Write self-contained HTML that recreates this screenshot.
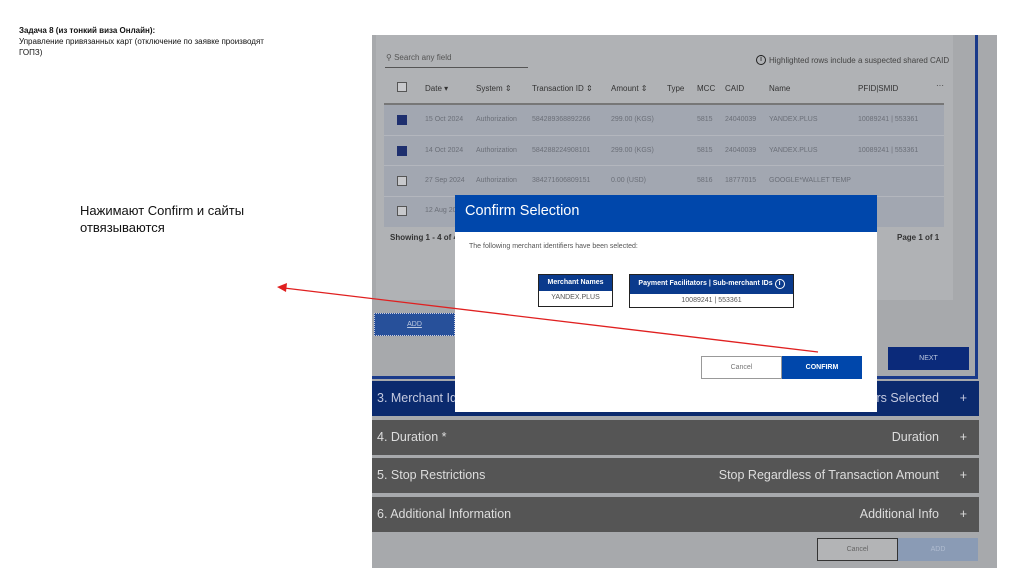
<!DOCTYPE html>
<html><head><meta charset="utf-8"><style>
*{margin:0;padding:0;box-sizing:border-box}
body{width:1024px;height:574px;background:#fff;position:relative;overflow:hidden;font-family:"Liberation Sans","DejaVu Sans",sans-serif}
.a{position:absolute}
.t{font-size:10.5px;color:#777;white-space:nowrap}
.h{font-size:8px;color:#333}
.r{font-size:7px;color:#6b6f78}
.cb{width:10px;height:10px;border:1px solid #555;background:#c8c9cc}
.cbk{width:10px;height:10px;background:#1e2f6e}
.acc{left:372px;width:607px;height:35px;background:#555;color:#ddd;font-size:12.5px;line-height:35px;padding-left:5px}
.acc span{position:absolute;right:12px}
.acc b{font-weight:normal;position:absolute;right:40px}
</style></head><body>
<div class="a" style="left:19px;top:25px;font-size:8px;font-weight:bold;color:#111;line-height:11px">Задача 8 (из тонкий виза Онлайн):</div>
<div class="a" style="left:19px;top:36px;font-size:8px;color:#111;line-height:11px;white-space:nowrap">Управление привязанных карт (отключение по заявке производят<br>ГОПЗ)</div>
<div class="a" style="left:80px;top:202px;font-size:13px;color:#111;line-height:17px">Нажимают Confirm и сайты<br>отвязываются</div>

<div class="a" style="left:372px;top:35px;width:625px;height:533px;background:#a7a9ac"></div>
<div class="a" style="left:376px;top:35px;width:577px;height:265px;background:#b0b2b5"></div>
<div class="a" style="left:975px;top:35px;width:3px;height:343px;background:#1a3a8a"></div>
<div class="a" style="left:372px;top:376px;width:606px;height:3px;background:#1a3a8a"></div>

<div class="a" style="left:385px;top:67px;width:143px;height:1px;background:#555"></div>
<div class="a t" style="left:386px;top:53px;font-size:8px;color:#555">⚲ Search any field</div>
<div class="a" style="left:756px;top:55px;width:10px;height:10px;border:1px solid #222;border-radius:50%;font-size:7px;text-align:center;line-height:8px">i</div>
<div class="a" style="left:769px;top:56px;font-size:8px;color:#444">Highlighted rows include a suspected shared CAID</div>

<div class="a cb" style="left:397px;top:82px"></div>
<div class="a h" style="left:425px;top:84px">Date ▾</div>
<div class="a h" style="left:476px;top:84px">System ⇕</div>
<div class="a h" style="left:532px;top:84px">Transaction ID ⇕</div>
<div class="a h" style="left:611px;top:84px">Amount ⇕</div>
<div class="a h" style="left:667px;top:84px">Type</div>
<div class="a h" style="left:697px;top:84px">MCC</div>
<div class="a h" style="left:725px;top:84px">CAID</div>
<div class="a h" style="left:769px;top:84px">Name</div>
<div class="a h" style="left:858px;top:84px">PFID|SMID</div>
<div class="a h" style="left:936px;top:81px">···</div>
<div class="a" style="left:384px;top:103px;width:560px;height:2px;background:#777"></div>
<div class="a" style="left:384px;top:105px;width:560px;height:122px;background:#a2a7b1"></div>
<div class="a" style="left:384px;top:135px;width:560px;height:1px;background:#b3b6bd"></div>
<div class="a" style="left:384px;top:165px;width:560px;height:1px;background:#b3b6bd"></div>
<div class="a" style="left:384px;top:196px;width:560px;height:1px;background:#b3b6bd"></div>

<div class="a cbk" style="left:397px;top:115px"></div>
<div class="a r" style="left:425px;top:116px">15 Oct 2024</div><div class="a r" style="left:476px;top:116px">Authorization</div><div class="a r" style="left:532px;top:116px">584289368892266</div><div class="a r" style="left:611px;top:116px">299.00 (KGS)</div><div class="a r" style="left:697px;top:116px">5815</div><div class="a r" style="left:725px;top:116px">24040039</div><div class="a r" style="left:769px;top:116px">YANDEX.PLUS</div><div class="a r" style="left:858px;top:116px">10089241 | 553361</div>
<div class="a cbk" style="left:397px;top:146px"></div>
<div class="a r" style="left:425px;top:147px">14 Oct 2024</div><div class="a r" style="left:476px;top:147px">Authorization</div><div class="a r" style="left:532px;top:147px">584288224908101</div><div class="a r" style="left:611px;top:147px">299.00 (KGS)</div><div class="a r" style="left:697px;top:147px">5815</div><div class="a r" style="left:725px;top:147px">24040039</div><div class="a r" style="left:769px;top:147px">YANDEX.PLUS</div><div class="a r" style="left:858px;top:147px">10089241 | 553361</div>
<div class="a cb" style="left:397px;top:176px"></div>
<div class="a r" style="left:425px;top:177px">27 Sep 2024</div><div class="a r" style="left:476px;top:177px">Authorization</div><div class="a r" style="left:532px;top:177px">384271606809151</div><div class="a r" style="left:611px;top:177px">0.00 (USD)</div><div class="a r" style="left:697px;top:177px">5816</div><div class="a r" style="left:725px;top:177px">18777015</div><div class="a r" style="left:769px;top:177px">GOOGLE*WALLET TEMP</div>
<div class="a cb" style="left:397px;top:206px"></div>
<div class="a r" style="left:425px;top:207px">12 Aug 2024</div>
<div class="a" style="left:390px;top:233px;font-size:8px;font-weight:bold;color:#333">Showing 1 - 4 of 4</div>
<div class="a" style="left:897px;top:233px;font-size:8px;font-weight:bold;color:#333">Page 1 of 1</div>

<div class="a" style="left:374px;top:313px;width:81px;height:23px;background:#27509a;border:1px dotted #ccd;color:#bcc8e0;font-size:7px;text-align:center;line-height:21px;text-decoration:underline">ADD</div>
<div class="a" style="left:888px;top:347px;width:81px;height:23px;background:#0b2a7a;color:#bcc8e0;font-size:7px;text-align:center;line-height:23px">NEXT</div>

<div class="a acc" style="top:381px;background:#0b2a6e;color:#c6cbe0">3. Merchant Identifiers<b>Merchant Identifiers Selected</b><span>+</span></div>
<div class="a acc" style="top:420px">4. Duration *<b>Duration</b><span>+</span></div>
<div class="a acc" style="top:458px">5. Stop Restrictions<b>Stop Regardless of Transaction Amount</b><span>+</span></div>
<div class="a acc" style="top:497px">6. Additional Information<b>Additional Info</b><span>+</span></div>
<div class="a" style="left:817px;top:538px;width:81px;height:23px;border:1px solid #333;background:#b3b4b6;font-size:7px;color:#666;text-align:center;line-height:21px">Cancel</div>
<div class="a" style="left:898px;top:538px;width:80px;height:23px;background:#8a9bb5;font-size:7px;color:#b0bcd0;text-align:center;line-height:23px">ADD</div>

<div class="a" style="left:455px;top:195px;width:422px;height:217px;background:#fff"></div>
<div class="a" style="left:455px;top:195px;width:422px;height:37px;background:#0047ab;color:#fff;font-size:14.5px;line-height:33px;padding-left:10px">Confirm Selection</div>
<div class="a" style="left:469px;top:243px;font-size:7px;color:#555">The following merchant identifiers have been selected:</div>
<div class="a" style="left:538px;top:274px;width:75px;height:33px;border:1px solid #222">
<div style="height:16px;background:#0a3a8c;color:#fff;font-size:7px;font-weight:bold;text-align:center;line-height:15px">Merchant Names</div>
<div style="font-size:7px;color:#555;text-align:center;line-height:14px">YANDEX.PLUS</div></div>
<div class="a" style="left:629px;top:274px;width:165px;height:34px;border:1px solid #222">
<div style="height:19px;background:#0a3a8c;color:#fff;font-size:7px;font-weight:bold;text-align:center;line-height:17px">Payment Facilitators | Sub-merchant IDs <span style="display:inline-block;width:10px;height:10px;border:1px solid #fff;border-radius:50%;line-height:8px;font-size:7px">i</span></div>
<div style="font-size:7px;color:#555;text-align:center;line-height:13px">10089241 | 553361</div></div>
<div class="a" style="left:701px;top:356px;width:81px;height:23px;border:1px solid #999;font-size:7px;color:#777;text-align:center;line-height:21px">Cancel</div>
<div class="a" style="left:782px;top:356px;width:80px;height:23px;background:#0047ab;font-size:7px;font-weight:bold;color:#fff;text-align:center;line-height:23px">CONFIRM</div>

<svg class="a" style="left:0;top:0" width="1024" height="574"><line x1="818" y1="352" x2="284" y2="288" stroke="#e02020" stroke-width="1.3"/><polygon points="277,287 287,283 286,292" fill="#e02020"/></svg>
</body></html>
